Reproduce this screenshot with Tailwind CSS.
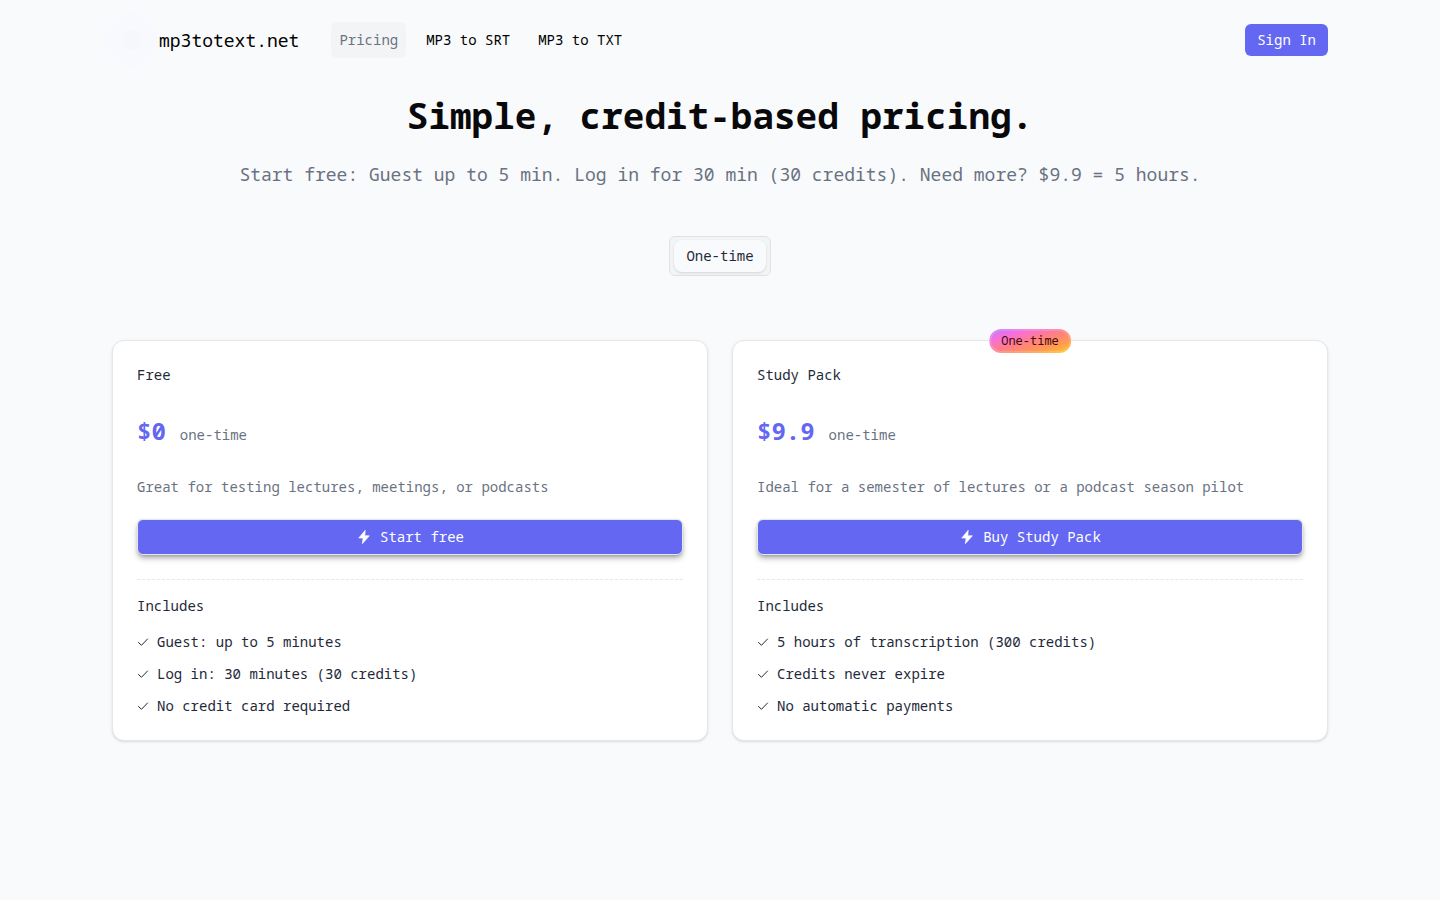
<!DOCTYPE html>
<html lang="en">
<head>
<meta charset="utf-8">
<meta name="viewport" content="width=device-width, initial-scale=1">
<title>Pricing - mp3totext.net</title>
<script src="https://cdn.jsdelivr.net/npm/@tailwindcss/browser@4"></script>
</head>
<body class="min-h-screen bg-[#f9fafc] font-['Noto_Sans_Mono','DejaVu_Sans_Mono',monospace] text-sm text-gray-800">
<svg class="hidden" aria-hidden="true">
  <symbol id="bolt" viewBox="0 0 24 24"><path d="M13.8 2 4.2 13.5h6.4L9.6 22 20 10.2h-6.8z" fill="currentColor" stroke="currentColor" stroke-linejoin="round"/></symbol>
  <symbol id="check" viewBox="0 0 24 24"><path d="M2.5 12.5 9 18.5 21.5 5.5" fill="none" stroke="currentColor" stroke-width="2"/></symbol>
</svg>
<header class="mx-auto flex h-20 max-w-7xl items-center px-8">
  <a href="#" class="flex items-center gap-2 text-lg text-black">
    <span class="flex size-[39px] items-center justify-center rounded-full bg-[#f7f9fe] shadow-[0_0_8px_8px_#f7f9fe]"><span class="h-5 w-4 rounded-full bg-[#f5f7fd]"></span></span>
    <span>mp3totext.net</span>
  </a>
  <nav class="ml-8 flex gap-3 text-black">
    <a href="#" class="rounded-md bg-gray-100 px-2 py-2 text-gray-500">Pricing</a>
    <a href="#" class="px-2 py-2">MP3 to SRT</a>
    <a href="#" class="px-2 py-2">MP3 to TXT</a>
  </nav>
  <button class="ml-auto h-8 rounded-md bg-[#6467f2] px-3 text-white">Sign In</button>
</header>
<main class="mx-auto max-w-7xl px-8 pt-4">
  <div class="text-center">
    <h1 class="text-4xl font-bold text-[#09090b]">Simple, credit-based pricing.</h1>
    <p class="mt-6 text-lg text-gray-500">Start free: Guest up to 5 min. Log in for 30 min (30 credits). Need more? $9.9 = 5 hours.</p>
  </div>
  <div class="mt-12 flex justify-center">
    <div class="flex h-10 items-center rounded-md border border-[#dfe1e5] bg-gray-100 px-1">
      <button class="h-8 rounded-lg bg-[#f9fafc] px-3 shadow-sm">One-time</button>
    </div>
  </div>
  <div class="mt-16 grid gap-6 md:grid-cols-2">
    <section class="rounded-xl border border-gray-200 bg-white p-6 shadow-sm">
      <h2>Free</h2>
      <p class="mt-[30px] flex items-baseline gap-3.5"><span class="text-2xl font-bold text-[#6467f2]">$0</span><span class="text-gray-500">one-time</span></p>
      <p class="mt-[30px] text-gray-500">Great for testing lectures, meetings, or podcasts</p>
      <button class="mt-[22px] flex h-9 w-full items-center justify-center gap-2 rounded-md border border-gray-200 bg-[#6467f2] text-white shadow-md shadow-black/30"><svg class="size-4" aria-hidden="true"><use href="#bolt"/></svg>Start free</button>
      <div class="mt-6 border-t border-dashed border-gray-200 pt-4">
        <h3>Includes</h3>
        <ul class="mt-4 space-y-3">
          <li class="flex gap-2"><svg class="mt-1 size-3" aria-hidden="true"><use href="#check"/></svg>Guest: up to 5 minutes</li>
          <li class="flex gap-2"><svg class="mt-1 size-3" aria-hidden="true"><use href="#check"/></svg>Log in: 30 minutes (30 credits)</li>
          <li class="flex gap-2"><svg class="mt-1 size-3" aria-hidden="true"><use href="#check"/></svg>No credit card required</li>
        </ul>
      </div>
    </section>
    <section class="relative rounded-xl border border-gray-200 bg-white p-6 shadow-sm">
      <span class="absolute -top-3 left-1/2 flex h-6 -translate-x-1/2 items-center rounded-full border-2 border-white/15 bg-[linear-gradient(to_bottom_right,#b87bff,#f76fdc_25%,#ff7f86_50%,#ff9a50_75%,#ffcb20)] bg-origin-border px-2.5 text-xs whitespace-nowrap text-[#460809]">One-time</span>
      <h2>Study Pack</h2>
      <p class="mt-[30px] flex items-baseline gap-3.5"><span class="text-2xl font-bold text-[#6467f2]">$9.9</span><span class="text-gray-500">one-time</span></p>
      <p class="mt-[30px] text-gray-500">Ideal for a semester of lectures or a podcast season pilot</p>
      <button class="mt-[22px] flex h-9 w-full items-center justify-center gap-2 rounded-md border border-gray-200 bg-[#6467f2] text-white shadow-md shadow-black/30"><svg class="size-4" aria-hidden="true"><use href="#bolt"/></svg>Buy Study Pack</button>
      <div class="mt-6 border-t border-dashed border-gray-200 pt-4">
        <h3>Includes</h3>
        <ul class="mt-4 space-y-3">
          <li class="flex gap-2"><svg class="mt-1 size-3" aria-hidden="true"><use href="#check"/></svg>5 hours of transcription (300 credits)</li>
          <li class="flex gap-2"><svg class="mt-1 size-3" aria-hidden="true"><use href="#check"/></svg>Credits never expire</li>
          <li class="flex gap-2"><svg class="mt-1 size-3" aria-hidden="true"><use href="#check"/></svg>No automatic payments</li>
        </ul>
      </div>
    </section>
  </div>
</main>
</body>
</html>
